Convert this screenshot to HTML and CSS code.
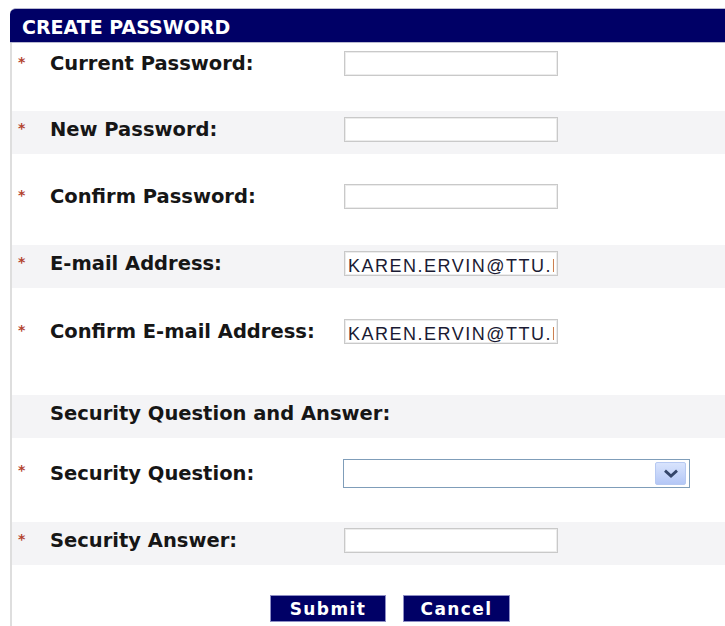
FILE: index.html
```html
<!DOCTYPE html>
<html lang="en">
<head>
<meta charset="utf-8">
<title>Create Password</title>
<link rel="stylesheet" href="styles.css">
</head>
<body>
<form class="panel" action="#" onsubmit="return false;">
  <div class="panel-head">CREATE PASSWORD</div>
  <div class="panel-body">
    <div class="field field-a">
      <span class="req">*</span>
      <label class="label" for="cur">Current Password:</label>
      <input class="text" id="cur" type="password">
    </div>
    <div class="field shade">
      <span class="req">*</span>
      <label class="label" for="new">New Password:</label>
      <input class="text" id="new" type="password">
    </div>
    <div class="field field-c">
      <span class="req">*</span>
      <label class="label" for="conf">Confirm Password:</label>
      <input class="text" id="conf" type="password">
    </div>
    <div class="field shade">
      <span class="req">*</span>
      <label class="label" for="mail">E-mail Address:</label>
      <input class="text" id="mail" type="text" value="KAREN.ERVIN@TTU.EDU">
    </div>
    <div class="field field-e">
      <span class="req">*</span>
      <label class="label" for="mail2">Confirm E-mail Address:</label>
      <input class="text" id="mail2" type="text" value="KAREN.ERVIN@TTU.EDU">
    </div>
    <div class="field shade section">
      <span class="req"></span>
      <span class="label wide">Security Question and Answer:</span>
    </div>
    <div class="field field-g">
      <span class="req">*</span>
      <label class="label" for="q">Security Question:</label>
      <div class="select-wrap">
        <select id="q" class="select"><option></option></select>
        <span class="select-btn">
          <svg width="16" height="9" viewBox="0 0 16 9" aria-hidden="true">
            <path d="M2 1.6 L8 7 L14 1.6" fill="none" stroke="#34456a" stroke-width="2.8" stroke-linejoin="miter"/>
          </svg>
        </span>
      </div>
    </div>
    <div class="field shade">
      <span class="req">*</span>
      <label class="label" for="ans">Security Answer:</label>
      <input class="text" id="ans" type="text">
    </div>
    <div class="actions">
      <button class="btn btn-submit" type="submit">Submit</button>
      <button class="btn btn-cancel" type="button">Cancel</button>
    </div>
  </div>
</form>
</body>
</html>
```

FILE: styles.css
```css
* {
  box-sizing: border-box;
}

body {
  margin: 0;
  background: #ffffff;
  font-family: "DejaVu Sans", Verdana, sans-serif;
  color: #161616;
  overflow: hidden;
}

.panel {
  margin: 8px 0 0 10px;
}

/* navy title bar with a rounded top-left corner */
.panel-head {
  height: 35px;
  background: #000066;
  border-top: 1px solid #b9b9d0;
  border-bottom: 1px solid #b9b9d0;
  border-top-left-radius: 6px;
  color: #ffffff;
  font-weight: bold;
  font-size: 19px;
  padding: 2px 0 0 12px;
  display: flex;
  align-items: center;
}

.panel-body {
  border-left: 2px solid #dedede;
}

/* one form row: marker, label column, control */
.field {
  display: flex;
  align-items: center;
  padding: 6px 0 12px;
}

.field.shade {
  background: #f4f4f6;
}

.field-a { padding: 8px 0 35px; }
.field-c { padding: 30px 0 36px; }
.field-e { padding: 31px 0 51px; }
.field-g { padding: 21px 0 34px; }

.section {
  min-height: 43px;
}

.section .label {
  line-height: 25px;
}

.req {
  width: 38px;
  flex: none;
  padding-left: 6px;
  color: #b3442f;
  font-size: 14px;
  font-weight: bold;
  align-self: flex-start;
  padding-top: 3px;
}

.label {
  width: 294px;
  flex: none;
  font-size: 19.5px;
  font-weight: bold;
  color: #161616;
}

.label.wide {
  width: auto;
}

.text {
  width: 214px;
  height: 25px;
  border: 1px solid #c9c9c9;
  box-shadow: inset 0 0 0 1px #ececec;
  background: #ffffff;
  padding: 6px 3px 0;
  margin: 0;
  font-family: "Liberation Sans", Arial, sans-serif;
  font-size: 18px;
  letter-spacing: 1.5px;
  color: #1a1a33;
  outline: none;
}

/* drop-down with a classic pale-blue arrow button */
.select-wrap {
  position: relative;
  width: 347px;
  height: 29px;
  margin-left: -1px;
}

.select {
  width: 100%;
  height: 100%;
  margin: 0;
  appearance: none;
  -webkit-appearance: none;
  border: 1px solid #7f9db9;
  border-radius: 0;
  background: #ffffff;
  font-family: "Liberation Sans", Arial, sans-serif;
  font-size: 16px;
}

.select-btn {
  position: absolute;
  top: 3px;
  right: 4px;
  width: 31px;
  height: 23px;
  border: 1px solid #b7c9f2;
  border-radius: 2px;
  background: linear-gradient(#d9e4fd, #b4c7f6);
  display: flex;
  align-items: center;
  justify-content: center;
  pointer-events: none;
}

.actions {
  display: flex;
  gap: 17px;
  padding: 30px 0 0 258px;
  height: 61px;
}

.btn {
  height: 27px;
  background: #000066;
  color: #ffffff;
  border: 1px solid #8e8ec4;
  font-family: "DejaVu Sans", Verdana, sans-serif;
  font-weight: bold;
  font-size: 17px;
  letter-spacing: 1.4px;
  padding: 0;
  cursor: pointer;
}

.btn-submit { width: 116px; }
.btn-cancel { width: 107px; }
```
